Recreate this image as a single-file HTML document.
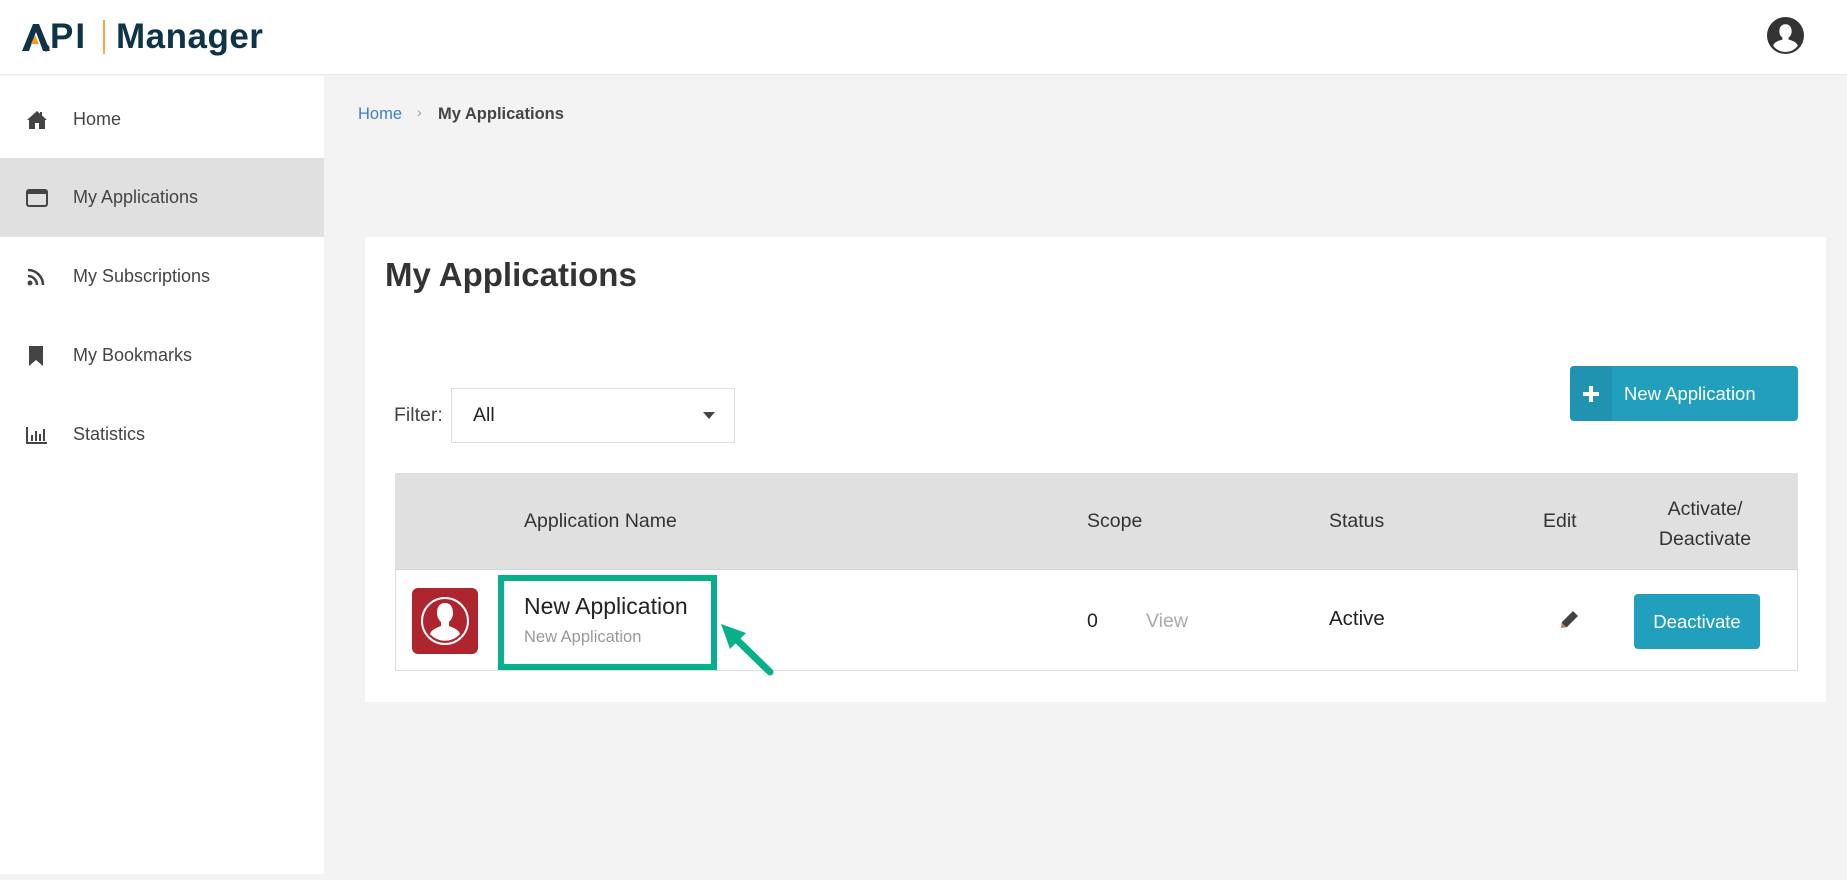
<!DOCTYPE html>
<html><head><meta charset="utf-8">
<style>
*{margin:0;padding:0;box-sizing:border-box}
body{width:1847px;height:880px;background:#f3f3f3;font-family:"Liberation Sans",sans-serif;position:relative;overflow:hidden;color:#333}
.abs{position:absolute}
#hdr{left:0;top:0;width:1847px;height:75px;background:#fff;border-bottom:1px solid #ececec}
#side{left:0;top:76px;width:324px;height:798px;background:#fff}
.nav{position:absolute;left:0;width:324px;height:79px;display:flex;align-items:center;font-size:18px;color:#444}
.nav svg{position:absolute;left:26px}
.nav span{position:absolute;left:73px}
.th{position:absolute;font-size:19.5px;color:#333}
</style></head><body>
<div id="hdr" class="abs">
  <svg class="abs" style="left:22px;top:22px" width="30" height="30" viewBox="0 0 30 30">
    <path d="M0 29 L11 2 L17 2 L28 29 L21 29 L14 10 L7 29 Z" fill="#0e3448"/>
    <path d="M9 22 L13 13 L17 22 Z" fill="#f39c1f"/>
    <circle cx="24" cy="26" r="3.5" fill="#0e3448"/>
  </svg>
  <div class="abs" style="left:50px;top:19px;font-size:35px;line-height:36px;font-weight:bold;color:#0e3448;letter-spacing:2px">PI</div>
  <div class="abs" style="left:103px;top:20px;width:2px;height:34px;background:#f5a742"></div>
  <div class="abs" style="left:116px;top:19px;font-size:35px;line-height:36px;font-weight:bold;color:#0e3448;letter-spacing:0.5px">Manager</div>
  <svg class="abs" style="left:1767px;top:17px" width="37" height="37" viewBox="0 0 36 36">
    <circle cx="18" cy="18" r="18" fill="#333"/>
    <path d="M18 7c-4 0-6 3-6 7 0 3 1.5 5 3 6v2c-4 1-8 2.5-9 6a15 15 0 0 0 24 0c-1-3.5-5-5-9-6v-2c1.5-1 3-3 3-6 0-4-2-7-6-7z" fill="#fff"/>
  </svg>
</div>
<div id="side" class="abs">
  <div class="nav" style="top:4px"><svg width="22" height="20" viewBox="0 0 22 20"><path d="M11 1 L1 10 L3 10 L3 19 L9 19 L9 13 L13 13 L13 19 L19 19 L19 10 L21 10 L16 5.5 L16 2 L14 2 L14 3.8 Z" fill="#444"/></svg><span>Home</span></div>
  <div class="nav" style="top:82px;background:#e0e0e0"><svg width="22" height="20" viewBox="0 0 22 20"><rect x="1" y="2" width="20" height="16" rx="2" fill="none" stroke="#444" stroke-width="2"/><rect x="1" y="2" width="20" height="4" fill="#444"/></svg><span>My Applications</span></div>
  <div class="nav" style="top:161px"><svg width="22" height="20" viewBox="0 0 22 20"><circle cx="4" cy="16" r="2.5" fill="#444"/><path d="M2 9a9 9 0 0 1 9 9" fill="none" stroke="#444" stroke-width="2.6"/><path d="M2 3a15 15 0 0 1 15 15" fill="none" stroke="#444" stroke-width="2.6"/></svg><span>My Subscriptions</span></div>
  <div class="nav" style="top:240px"><svg width="22" height="22" viewBox="0 0 22 22"><path d="M3 1h14v20l-7-6-7 6z" fill="#444"/></svg><span>My Bookmarks</span></div>
  <div class="nav" style="top:319px"><svg width="22" height="20" viewBox="0 0 22 20"><path d="M1 2v16h20" fill="none" stroke="#444" stroke-width="2"/><rect x="5" y="10" width="2" height="6" fill="#444"/><rect x="9" y="6" width="2" height="10" fill="#444"/><rect x="13" y="9" width="2" height="7" fill="#444"/><rect x="17" y="4" width="2" height="12" fill="#444"/></svg><span>Statistics</span></div>
</div>
<div class="abs" style="left:358px;top:105px;font-size:16.5px;color:#3f7fc4">Home</div>
<div class="abs" style="left:417px;top:104px;font-size:14px;color:#999">›</div>
<div class="abs" style="left:438px;top:105px;font-size:16.5px;font-weight:bold;color:#444">My Applications</div>

<div class="abs" style="left:365px;top:237px;width:1461px;height:465px;background:#fff"></div>
<div class="abs" style="left:385px;top:256px;font-size:33px;font-weight:bold;color:#333">My Applications</div>
<div class="abs" style="left:394px;top:404px;font-size:19.5px;color:#444">Filter:</div>
<div class="abs" style="left:451px;top:388px;width:284px;height:55px;border:1px solid #ddd;background:#fff"></div>
<div class="abs" style="left:473px;top:404px;font-size:19.5px;color:#222">All</div>
<svg class="abs" style="left:703px;top:412px" width="12" height="7" viewBox="0 0 12 7"><path d="M0 0h12L6 7z" fill="#444"/></svg>

<div class="abs" style="left:1570px;top:366px;width:228px;height:55px;background:#229fbd;border-radius:4px;overflow:hidden">
  <div style="position:absolute;left:0;top:0;width:42px;height:55px;background:#1f93af"></div>
  <svg style="position:absolute;left:13px;top:20px" width="16" height="16" viewBox="0 0 16 16"><path d="M6 0h4v6h6v4h-6v6H6v-6H0V6h6z" fill="#fff"/></svg>
  <div style="position:absolute;left:54px;top:17px;font-size:18.5px;color:#fff">New Application</div>
</div>

<div class="abs" style="left:395px;top:473px;width:1403px;height:198px;border:1px solid #ddd;background:#fff"></div>
<div class="abs" style="left:395px;top:473px;width:1403px;height:97px;background:#e0e0e0;border-bottom:1px solid #d4d4d4"></div>
<div class="th" style="left:524px;top:510px">Application Name</div>
<div class="th" style="left:1087px;top:510px">Scope</div>
<div class="th" style="left:1329px;top:510px">Status</div>
<div class="th" style="left:1543px;top:510px">Edit</div>
<div class="th" style="left:1620px;top:494px;width:170px;text-align:center;line-height:30px">Activate/<br>Deactivate</div>

<svg class="abs" style="left:412px;top:588px" width="66" height="66" viewBox="0 0 66 66">
  <rect width="66" height="66" rx="6" fill="#ae2530"/>
  <circle cx="33" cy="33" r="23" fill="none" stroke="#fff" stroke-width="2"/>
  <path d="M33 15c-6 0-8 5-8 10 0 4 2 7 4 9v4c-5 2-10 4-11 8a20 20 0 0 0 30 0c-1-4-6-6-11-8v-4c2-2 4-5 4-9 0-5-2-10-8-10z" fill="#fff"/>
</svg>
<div class="abs" style="left:524px;top:593px;font-size:23px;color:#222">New Application</div>
<div class="abs" style="left:524px;top:628px;font-size:16.5px;color:#999">New Application</div>
<div class="abs" style="left:1087px;top:610px;font-size:19.5px;color:#222">0</div>
<div class="abs" style="left:1146px;top:610px;font-size:19.5px;color:#aaa">View</div>
<div class="abs" style="left:1329px;top:607px;font-size:20.5px;color:#222">Active</div>
<svg class="abs" style="left:1559px;top:610px" width="20" height="20" viewBox="0 0 20 20"><path d="M14 1l5 5-11 11-6 1 1-6z" fill="#444"/><path d="M3 13l4 4-5 1z" fill="#c8895a"/></svg>
<div class="abs" style="left:1634px;top:594px;width:126px;height:55px;background:#229fbd;border-radius:4px;color:#fff;font-size:18.5px;text-align:center;line-height:55px">Deactivate</div>

<div class="abs" style="left:498px;top:575px;width:219px;height:95px;border:6px solid #07b08a"></div>
<svg class="abs" style="left:715px;top:618px" width="65" height="62" viewBox="715 618 65 62">
  <path d="M770 672 L733 636" stroke="#07b08a" stroke-width="7" stroke-linecap="round"/>
  <path d="M721 624 L746 633 L730 649 Z" fill="#07b08a"/>
</svg>
</body></html>
